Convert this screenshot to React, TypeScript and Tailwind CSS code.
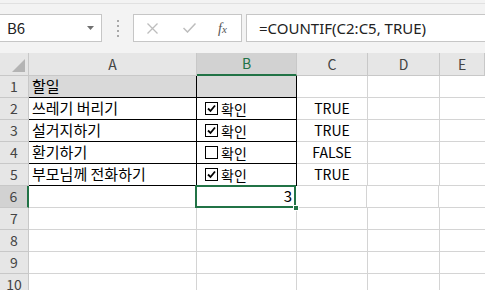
import React from "react";

const font = { fontFamily: '"Noto Sans CJK KR", "Noto Sans", sans-serif' };

const cols = [
  { key: "A", w: "w-[168px]" },
  { key: "B", w: "w-[100px]" },
  { key: "C", w: "w-[71px]" },
  { key: "D", w: "w-[72px]" },
  { key: "E", w: "flex-1" },
];

const rows = [
  { task: "할일", check: null, result: "" },
  { task: "쓰레기 버리기", check: true, result: "TRUE" },
  { task: "설거지하기", check: true, result: "TRUE" },
  { task: "환기하기", check: false, result: "FALSE" },
  { task: "부모님께 전화하기", check: true, result: "TRUE" },
];

function CheckBox({ checked }: { checked: boolean }) {
  return (
    <div className="flex items-center gap-[3px]">
      <div className="w-[13px] h-[13px] border border-black bg-white flex items-center justify-center">
        {checked && (
          <svg width="9" height="9" viewBox="0 0 9 9">
            <path d="M1 4.5 L3.5 7 L8 1.5" stroke="#000" strokeWidth="1.8" fill="none" />
          </svg>
        )}
      </div>
      <span className="text-[14px] text-black leading-none">확인</span>
    </div>
  );
}

export default function App() {
  const extraRows = [7, 8, 9, 10];
  return (
    <div className="w-[485px] h-[290px] overflow-hidden bg-[#f3f3f3] select-none" style={font}>
      {/* 수식 입력줄 */}
      <div className="h-[50px] border-t border-[#e1e1e1] mt-[3px] pt-[10px]">
        <div className="flex h-[28px]">
          <div className="w-[102px] bg-white border border-l-0 border-[#c6c6c6] flex items-center justify-between pl-[7px] pr-[7px]">
            <span className="text-[15px] text-[#222]">B6</span>
            <svg width="7" height="4" viewBox="0 0 7 4">
              <path d="M0 0 L7 0 L3.5 4 Z" fill="#707070" />
            </svg>
          </div>
          <div className="w-[31px] flex flex-col items-center justify-center gap-[3px]">
            <div className="w-[2px] h-[2px] bg-[#a8a8a8]" />
            <div className="w-[2px] h-[2px] bg-[#a8a8a8]" />
            <div className="w-[2px] h-[2px] bg-[#a8a8a8]" />
            <div className="w-[2px] h-[2px] bg-[#a8a8a8]" />
          </div>
          <div className="w-[109px] bg-white border border-[#c6c6c6] flex items-center">
            <svg className="ml-[13px]" width="11" height="11" viewBox="0 0 11 11">
              <path d="M0.5 0.5 L10.5 10.5 M10.5 0.5 L0.5 10.5" stroke="#bdbdbd" strokeWidth="1.3" />
            </svg>
            <svg className="ml-[25px]" width="13" height="10" viewBox="0 0 13 10">
              <path d="M0.5 5 L4.5 9 L12.5 0.5" stroke="#bdbdbd" strokeWidth="1.5" fill="none" />
            </svg>
            <span className="ml-[22px] text-[14px] text-[#555] italic" style={{ fontFamily: '"Liberation Serif", serif' }}>
              f<span className="text-[11px]">x</span>
            </span>
          </div>
          <div className="w-[4px]" />
          <div className="flex-1 bg-white border border-r-0 border-[#c6c6c6] flex items-center pl-[12px]">
            <span className="text-[15px] text-[#222]" style={{ fontFamily: '"Noto Sans", sans-serif' }}>
              =COUNTIF(C2:C5, TRUE)
            </span>
          </div>
        </div>
      </div>

      {/* 시트 */}
      <div className="bg-white">
        {/* 열 머리글 */}
        <div className="flex h-[23px] bg-[#e6e6e6]">
          <div className="w-[29px] border-r border-b border-[#c8c8c8] relative">
            <svg className="absolute right-[3px] bottom-[3px]" width="13" height="13" viewBox="0 0 13 13">
              <path d="M13 0 L13 13 L0 13 Z" fill="#b4b4b4" />
            </svg>
          </div>
          {cols.map((c) => (
            <div
              key={c.key}
              className={
                c.key === "B"
                  ? `${c.w} bg-[#d2d2d2] border-r border-[#c8c8c8] border-b-2 border-b-[#217346] flex items-center justify-center text-[14px] text-[#217346]`
                  : `${c.w} border-r border-b border-[#c8c8c8] flex items-center justify-center text-[14px] text-[#444]`
              }
            >
              {c.key}
            </div>
          ))}
        </div>

        {/* 데이터 행 */}
        {rows.map((r, i) => (
          <div key={i} className="flex h-[22px]">
            <div className="w-[29px] bg-[#e6e6e6] border-r border-b border-[#c8c8c8] flex items-center justify-center text-[14px] text-[#444]">
              {i + 1}
            </div>
            <div
              className={`w-[168px] border-r border-b border-black flex items-center pl-[3px] text-[15px] text-black ${
                i === 0 ? "bg-[#d9d9d9]" : ""
              }`}
            >
              {r.task}
            </div>
            <div
              className={`w-[100px] border-r border-b border-black flex items-center pl-[8px] ${
                i === 0 ? "bg-[#d9d9d9]" : ""
              }`}
            >
              {r.check !== null && <CheckBox checked={r.check} />}
            </div>
            <div className="w-[71px] border-r border-b border-[#d4d4d4] flex items-center justify-center text-[14px] text-black">
              {r.result}
            </div>
            <div className="w-[72px] border-r border-b border-[#d4d4d4]" />
            <div className="flex-1 border-b border-[#d4d4d4]" />
          </div>
        ))}

        {/* 6행: 선택된 셀 */}
        <div className="flex h-[22px]">
          <div className="w-[29px] bg-[#d2d2d2] border-r-2 border-r-[#217346] border-b border-[#c8c8c8] flex items-center justify-center text-[14px] text-[#444]">
            6
          </div>
          <div className="w-[167px] border-r border-b border-[#d4d4d4]" />
          <div className="w-[100px] border-r border-b border-[#d4d4d4] relative">
            <div className="absolute -left-[1px] -top-[1px] -right-[1px] -bottom-[1px] border-2 border-[#217346] flex items-center justify-end pr-[2px] text-[15px] text-black">
              3
            </div>
            <div className="absolute -right-[4px] -bottom-[4px] w-[6px] h-[6px] bg-[#217346] border border-white" />
          </div>
          <div className="w-[71px] border-r border-b border-[#d4d4d4]" />
          <div className="w-[72px] border-r border-b border-[#d4d4d4]" />
          <div className="flex-1 border-b border-[#d4d4d4]" />
        </div>

        {extraRows.map((n) => (
          <div key={n} className="flex h-[22px]">
            <div className="w-[29px] bg-[#e6e6e6] border-r border-b border-[#c8c8c8] flex items-center justify-center text-[14px] text-[#444]">
              {n}
            </div>
            <div className="w-[168px] border-r border-b border-[#d4d4d4]" />
            <div className="w-[100px] border-r border-b border-[#d4d4d4]" />
            <div className="w-[71px] border-r border-b border-[#d4d4d4]" />
            <div className="w-[72px] border-r border-b border-[#d4d4d4]" />
            <div className="flex-1 border-b border-[#d4d4d4]" />
          </div>
        ))}
      </div>
    </div>
  );
}
